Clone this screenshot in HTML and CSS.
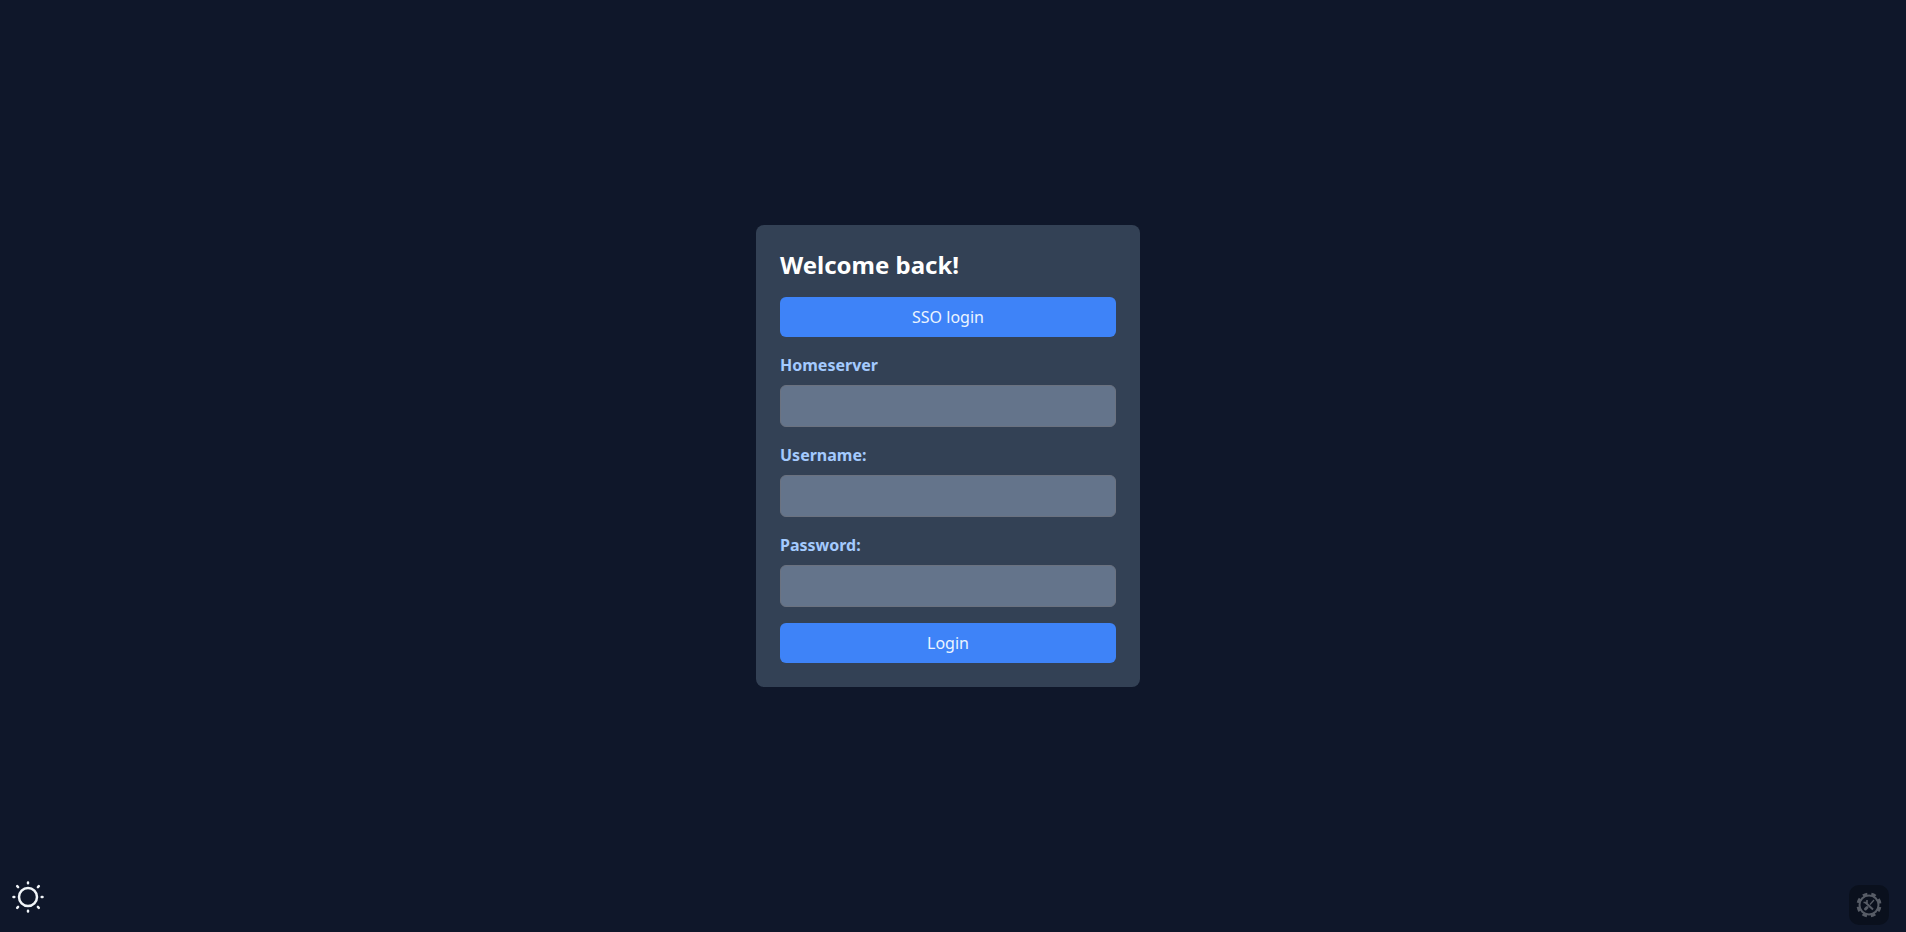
FILE: index.html
```html
<!DOCTYPE html>
<html lang="en">
<head>
<meta charset="utf-8">
<meta name="viewport" content="width=device-width, initial-scale=1.0">
<title>Login</title>
<link rel="stylesheet" href="styles.css">
</head>

<body>
<main class="login-page">
    <form class="login-card">
        <h1 class="login-title">Welcome back!</h1>
        <button type="button" class="btn">SSO login</button>
        <div class="field">
            <label for="homeserver">Homeserver</label>
            <input id="homeserver" name="homeserver" type="text">
        </div>
        <div class="field">
            <label for="username">Username:</label>
            <input id="username" name="username" type="text">
        </div>
        <div class="field">
            <label for="password">Password:</label>
            <input id="password" name="password" type="password">
        </div>
        <button type="submit" class="btn">Login</button>
    </form>
</main>

<button type="button" class="theme-toggle" aria-label="Toggle theme">
    <svg viewBox="0 0 32 32" fill="none" stroke="currentColor" stroke-width="2.5" stroke-linecap="round">
        <circle cx="16" cy="16" r="9"/>
        <path d="M16 1.5v.8M16 29.7v.8M1.5 16h.8M29.7 16h.8M5.2 5.2l.9.9M25.9 25.9l.9.9M5.2 26.8l.9-.9M25.9 6.1l.9-.9"/>
    </svg>
</button>

<button type="button" class="devtools-toggle" aria-label="Open tools">
    <svg viewBox="0 0 26 26" fill="none" stroke="currentColor">
        <circle cx="13" cy="13" r="9.5" stroke-width="2"/>
        <!-- gear teeth -->
        <circle cx="13" cy="13" r="11" stroke-width="3" stroke-dasharray="4.6 4.04" stroke-dashoffset="-2"/>
        <!-- crossed wrench and screwdriver -->
        <path d="M9.5 10.5l7.5 7" stroke-width="2"/>
        <path d="M7.5 10.5h3.5v-2.5" stroke-width="1.6"/>
        <path d="M18 8l-4 4.5" stroke-width="1.2"/>
        <path d="M11 15.5l-1.5 1.5" stroke-width="3" stroke-linecap="round"/>
    </svg>
</button>
</body>
</html>
```

FILE: styles.css
```css
* {
    box-sizing: border-box;
}
body {
    margin: 0;
    background-color: #0f172a;
    color: white;
    font-family: "Noto Sans", sans-serif;
    font-size: 16px;
    line-height: 24px;
}
.login-page {
    display: flex;
    align-items: center;
    justify-content: center;
    min-height: 100vh;
    padding: 0 10px 20px 0;
}
.login-card {
    display: flex;
    flex-direction: column;
    gap: 16px;
    width: 100%;
    max-width: 384px;
    padding: 24px;
    background-color: #334155;
    border-radius: 8px;
}
.login-title {
    margin: 0;
    font-size: 24px;
    line-height: 32px;
    font-weight: bold;
}
.btn {
    padding: 8px 16px;
    border: 0;
    border-radius: 6px;
    background-color: #3e83f8;
    color: #ebf5ff;
    font: inherit;
    cursor: pointer;
}
.btn:hover {
    background-color: #2563eb;
}
.field {
    display: flex;
    flex-direction: column;
    gap: 8px;
}
.field label {
    color: #a4cafe;
    font-weight: bold;
}
.field input {
    height: 42px;
    padding: 8px 12px;
    border: 1px solid #6b7280;
    border-radius: 6px;
    background-color: #64748b;
    color: white;
    font: inherit;
}
.theme-toggle {
    position: fixed;
    left: 12px;
    bottom: 19px;
    width: 32px;
    height: 32px;
    padding: 0;
    border: 0;
    background: none;
    color: #f1f5f9;
    cursor: pointer;
}
.theme-toggle svg {
    display: block;
}
.devtools-toggle {
    position: fixed;
    right: 17px;
    bottom: 7px;
    display: flex;
    align-items: center;
    justify-content: center;
    width: 40px;
    height: 40px;
    padding: 0;
    border: 0;
    border-radius: 10px;
    background-color: #0a101d;
    color: #575c66;
    cursor: pointer;
}
.devtools-toggle svg {
    width: 26px;
    height: 26px;
}
```
